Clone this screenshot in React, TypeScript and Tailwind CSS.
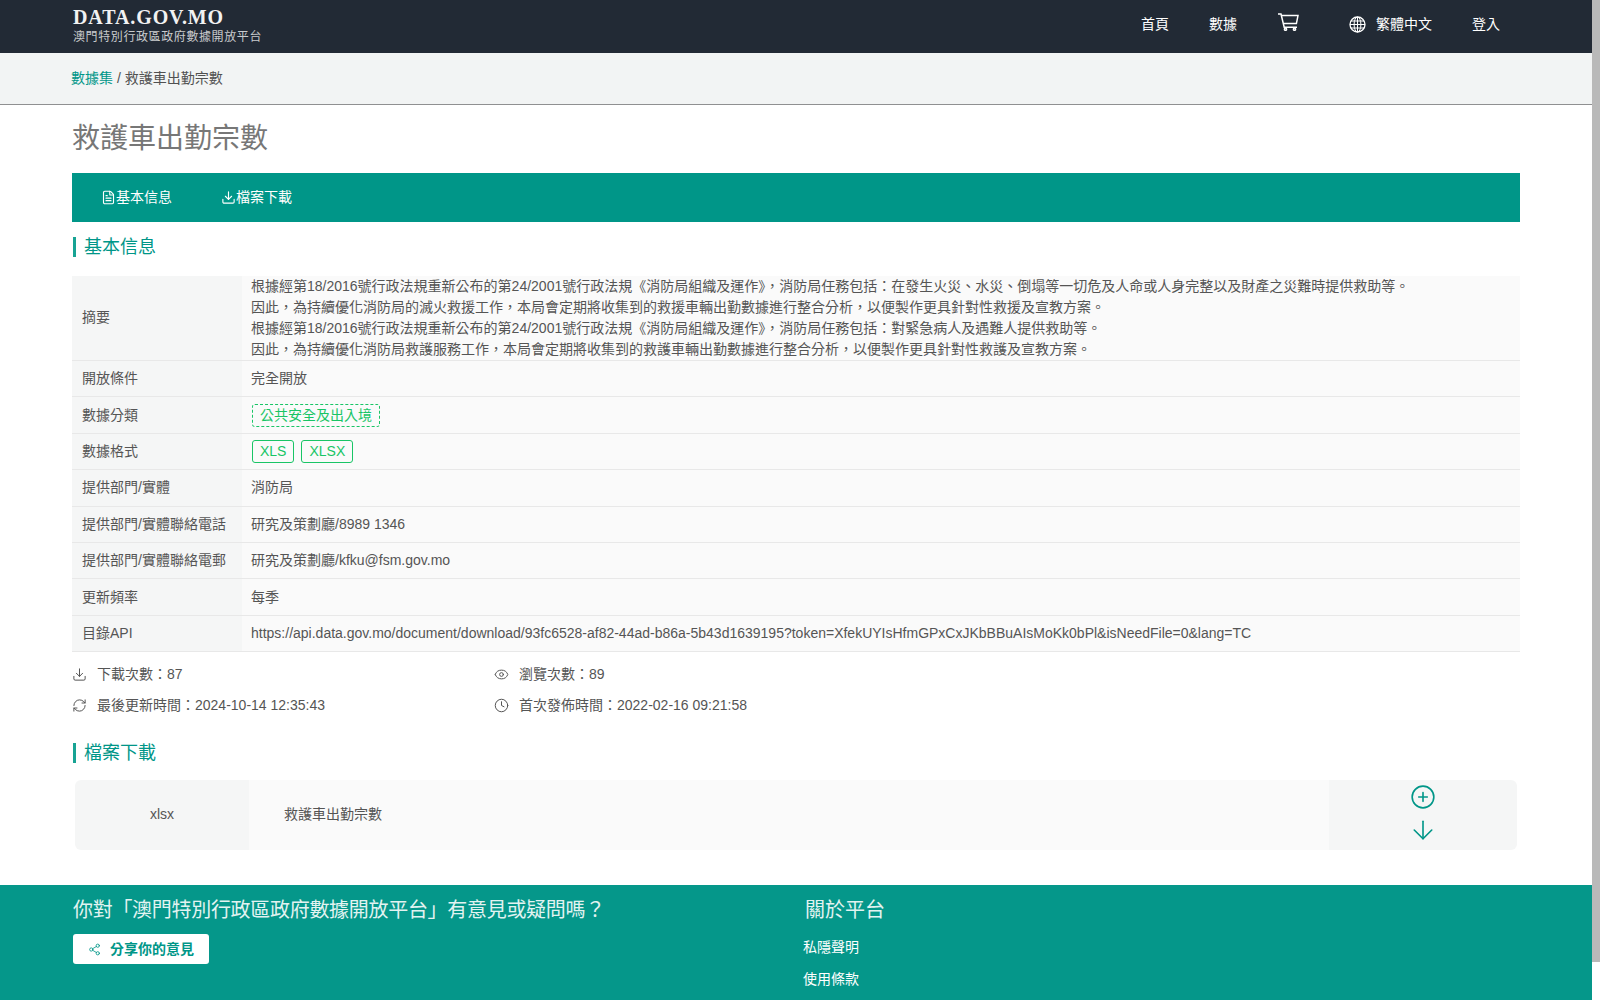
import React from 'react';
import { ArrowDown, CirclePlus, Clock, Download, Eye, FileText, RefreshCw, Share2 } from 'lucide-react';

const sans = "font-['Liberation_Sans','Noto_Sans_CJK_TC',sans-serif]";
const serif = "font-['Liberation_Serif','Noto_Sans_CJK_TC',serif]";

const rows = [
  { label: '開放條件', value: '完全開放' },
  { label: '數據分類', tag: 'category' },
  { label: '數據格式', tag: 'format' },
  { label: '提供部門/實體', value: '消防局' },
  { label: '提供部門/實體聯絡電話', value: '研究及策劃廳/8989 1346' },
  { label: '提供部門/實體聯絡電郵', value: '研究及策劃廳/kfku@fsm.gov.mo' },
  { label: '更新頻率', value: '每季' },
  {
    label: '目錄API',
    value: 'https://api.data.gov.mo/document/download/93fc6528-af82-44ad-b86a-5b43d1639195?token=XfekUYIsHfmGPxCxJKbBBuAIsMoKk0bPl&isNeedFile=0&lang=TC',
  },
];

const summary = [
  '根據經第18/2016號行政法規重新公布的第24/2001號行政法規《消防局組織及運作》，消防局任務包括：在發生火災、水災、倒塌等一切危及人命或人身完整以及財產之災難時提供救助等。',
  '因此，為持續優化消防局的滅火救援工作，本局會定期將收集到的救援車輛出勤數據進行整合分析，以便製作更具針對性救援及宣教方案。',
  '根據經第18/2016號行政法規重新公布的第24/2001號行政法規《消防局組織及運作》，消防局任務包括：對緊急病人及遇難人提供救助等。',
  '因此，為持續優化消防局救護服務工作，本局會定期將收集到的救護車輛出勤數據進行整合分析，以便製作更具針對性救護及宣教方案。',
];

function CartIcon() {
  return (
    <svg width="21" height="18" viewBox="0 0 21 18" fill="none" stroke="currentColor" strokeWidth="1.5" className="mb-[5px] ml-[41px]">
      <path d="M0 1h3l3.2 13.2H19" />
      <path d="M3.6 2.6H20l-1.6 8H5.6" />
      <circle cx="7.5" cy="16.2" r="1.1" />
      <circle cx="16.5" cy="16.2" r="1.1" />
    </svg>
  );
}

function GlobeIcon() {
  return (
    <svg width="17" height="17" viewBox="0 0 17 17" fill="none" stroke="currentColor" strokeWidth="1" className="ml-[50px]">
      <circle cx="8.5" cy="8.5" r="7.5" strokeWidth="1.3" />
      <ellipse cx="8.5" cy="8.5" rx="3.4" ry="7.5" />
      <path d="M8.5 1v15M1 8.5h15M2 5h13M2 12h13" />
    </svg>
  );
}

function SectionTitle({ children }: { children: React.ReactNode }) {
  return (
    <div className="ml-px flex h-[20px] items-center border-l-[3px] border-[#17a394] pl-2 text-[18px] text-[#009688]">
      {children}
    </div>
  );
}

function Stat({ icon, children }: { icon: React.ReactNode; children: React.ReactNode }) {
  return (
    <div className="flex w-[422px] items-center gap-[10px]">
      {icon}
      <span>{children}</span>
    </div>
  );
}

export default function App() {
  return (
    <div className={`relative h-[1000px] overflow-hidden bg-white text-[14px] leading-[21px] text-[#515a6e] ${sans}`}>
      <div className="w-[1592px]">
        <header className="flex h-[53px] items-center bg-[#222a35] pl-[73px] pr-[92px] text-white">
          <div>
            <div className={`text-[20px] leading-[21px] font-bold tracking-[0.9px] text-[#f2f2f2] ${serif}`}>DATA.GOV.MO</div>
            <div className="mt-px text-[12px] leading-[17px] tracking-[0.6px] text-[#c9cbcd]">澳門特別行政區政府數據開放平台</div>
          </div>
          <nav className="mb-[4px] ml-auto flex items-center">
            <span>首頁</span>
            <span className="ml-[40px]">數據</span>
            <CartIcon />
            <GlobeIcon />
            <span className="ml-[10px]">繁體中文</span>
            <span className="ml-[40px]">登入</span>
          </nav>
        </header>

        <div className="flex h-[52px] items-center border-b border-[#8f9091] bg-[#f2f4f4] pl-[71px] text-[#515151]">
          <span className="text-[#009688]">數據集</span>
          <span>&nbsp;/ 救護車出勤宗數</span>
        </div>

        <main className="px-[72px]">
          <h1 className={`pt-[16px] text-[28px] leading-[36px] text-[#777] ${serif}`}>救護車出勤宗數</h1>

          <div className="mt-[16px] flex h-[49px] items-center bg-[#009688] pb-[1px] pl-[29px] text-white">
            <FileText size={15} strokeWidth={1.8} />
            <span>基本信息</span>
            <Download size={15} strokeWidth={1.8} className="ml-[49px]" />
            <span>檔案下載</span>
          </div>

          <div className="mt-[15px]">
            <SectionTitle>基本信息</SectionTitle>
          </div>

          <div className="mt-[19px] text-[#555]">
            <div className="flex border-b border-[#e8e8e8]">
              <div className="flex w-[170px] items-center bg-[#f5f6f6] pb-[2px] pl-[10px]">摘要</div>
              <div className="flex-1 bg-[#fafafa] pl-[9px]">
                {summary.map((line) => (
                  <div key={line}>{line}</div>
                ))}
              </div>
            </div>
            {rows.map((row) => (
              <div key={row.label} className="flex h-[36.4px] border-b border-[#e8e8e8]">
                <div className="flex w-[170px] items-center bg-[#f5f6f6] pl-[10px]">{row.label}</div>
                <div className="flex flex-1 items-center gap-[7px] bg-[#fafafa] pl-[9px]">
                  {row.value}
                  {row.tag === 'category' && (
                    <span className="ml-px rounded-[3px] border border-dashed border-[#19c566] px-[7px] text-[#19c566]">公共安全及出入境</span>
                  )}
                  {row.tag === 'format' &&
                    ['XLS', 'XLSX'].map((f, i) => (
                      <span key={f} className={`rounded-[3px] border border-[#19c566] px-[7px] text-[#19c566] ${i === 0 ? 'ml-px' : ''}`}>
                        {f}
                      </span>
                    ))}
                </div>
              </div>
            ))}
          </div>

          <div className="mt-[12px] flex h-[21px] text-[#555]">
            <Stat icon={<Download size={15} strokeWidth={1.6} />}>下載次數：87</Stat>
            <Stat icon={<Eye size={15} strokeWidth={1.6} />}>瀏覽次數：89</Stat>
          </div>
          <div className="mt-[10px] flex h-[21px] text-[#555]">
            <Stat icon={<RefreshCw size={15} strokeWidth={1.6} />}>最後更新時間：2024-10-14 12:35:43</Stat>
            <Stat icon={<Clock size={15} strokeWidth={1.6} />}>首次發佈時間：2022-02-16 09:21:58</Stat>
          </div>

          <div className="mt-[27px]">
            <SectionTitle>檔案下載</SectionTitle>
          </div>

          <div className="mx-[3px] mt-[17px] flex h-[70px] overflow-hidden rounded-[6px] text-[#555]">
            <div className="flex w-[174px] items-center justify-center bg-[#f5f6f6] pb-[2px]">xlsx</div>
            <div className="flex flex-1 items-center bg-[#fafafa] pb-[2px] pl-[35px]">救護車出勤宗數</div>
            <div className="flex w-[188px] flex-col items-center gap-[5px] bg-[#f5f6f6] pt-[4px] text-[#009688]">
              <CirclePlus size={26} strokeWidth={1.5} />
              <ArrowDown size={30} strokeWidth={1.3} />
            </div>
          </div>
        </main>

        <footer className="mt-[35px] flex h-[115px] bg-[#05978a] pl-[73px] text-white">
          <div className="w-[732px]">
            <div className={`pt-[12px] text-[20px] leading-[26px] tracking-[-0.3px] text-[#e2f3f1] ${serif}`}>
              你對「澳門特別行政區政府數據開放平台」有意見或疑問嗎？
            </div>
            <div className="mt-[11px] flex h-[30px] w-[136px] items-center justify-center gap-[9px] rounded-[3px] bg-white font-bold text-[#009688]">
              <Share2 size={13} strokeWidth={1.5} />
              分享你的意見
            </div>
          </div>
          <div>
            <div className={`pt-[12px] text-[20px] leading-[26px] text-[#e2f3f1] ${serif}`}>關於平台</div>
            <div className="mt-[14px] -ml-[2px]">私隱聲明</div>
            <div className="mt-[11px] -ml-[2px]">使用條款</div>
          </div>
        </footer>
      </div>

      {/* scrollbar */}
      <div className="absolute right-0 top-0 h-[962px] w-[8px] bg-[#b9b9b9]" />
    </div>
  );
}
